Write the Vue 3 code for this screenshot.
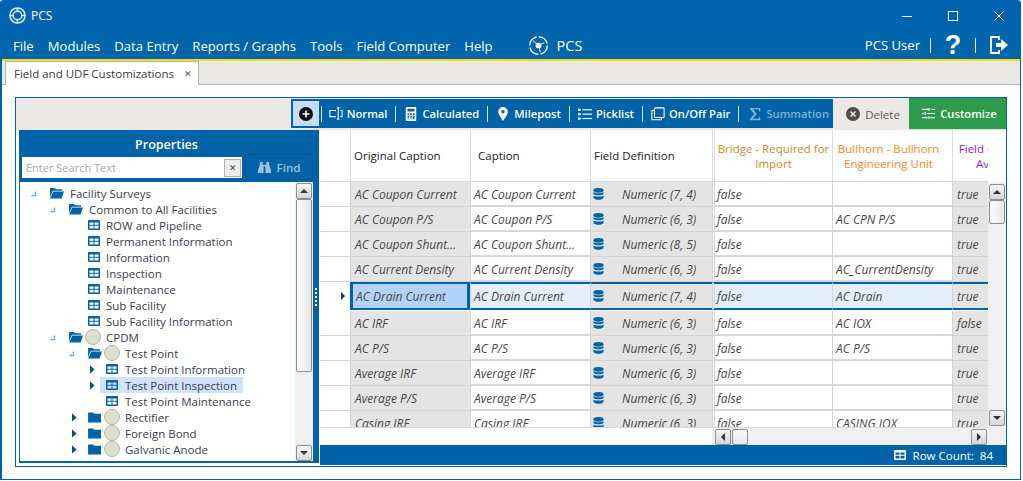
<template>
  <div class="window">
    <!-- title bar -->
    <div class="title-bar">
      <svg class="app-logo" viewBox="0 0 18 18" width="17" height="17">
        <circle cx="9" cy="9" r="8" fill="none" stroke="#dce9f4" stroke-width="1.600" />
        <circle cx="9" cy="9" r="4.600" fill="none" stroke="#dce9f4" stroke-width="1.600" />
        <path d="M9 1v4M9 13v4M1 9h4M13 9h4" stroke="#dce9f4" stroke-width="1.800" />
      </svg>
      <span class="app-name">PCS</span>
      <div class="win-controls">
        <svg viewBox="0 0 12 12" width="12" height="12"><path d="M1 6.500h10" stroke="#fff" /></svg>
        <svg viewBox="0 0 12 12" width="12" height="12"><rect x="1.500" y="1.500" width="9" height="9" fill="none" stroke="#fff" /></svg>
        <svg viewBox="0 0 12 12" width="12" height="12"><path d="M1.500 1.500l9 9M10.500 1.500l-9 9" stroke="#fff" /></svg>
      </div>
    </div>

    <!-- menu -->
    <div class="menu-bar">
      <span v-for="m in menus" :key="m" class="menu-item">{{ m }}</span>
      <div class="menu-logo">
        <svg viewBox="0 0 22 22" width="21" height="21">
          <circle cx="11" cy="11" r="9.200" fill="none" stroke="#fff" stroke-width="1.500" stroke-dasharray="12 2.500" />
          <circle cx="11" cy="11" r="3" fill="#fff" />
          <path d="M11 11L5 6M11 11l6-3M11 11l2 7" stroke="#fff" stroke-width="1" />
        </svg>
        <span>PCS</span>
      </div>
      <div class="menu-right">
        <span class="user">PCS User</span>
        <i class="menu-sep"></i>
        <span class="help">?</span>
        <i class="menu-sep"></i>
        <svg viewBox="0 0 20 20" width="20" height="20">
          <path d="M10 5V2H2v16h8v-3" fill="none" stroke="#fff" stroke-width="1.800" />
          <path d="M7 8h5V4l7 6-7 6v-4H7z" fill="#fff" />
        </svg>
      </div>
    </div>

    <!-- tabs -->
    <div class="tab-strip">
      <div class="tab">
        <span>Field and UDF Customizations</span>
        <span class="tab-x">✕</span>
      </div>
    </div>

    <div class="content">
      <div class="panel">
        <!-- toolbar -->
        <div class="toolbar">
          <div class="tool-blue">
            <div class="add-btn">
              <svg viewBox="0 0 14 14" width="14" height="14">
                <circle cx="7" cy="7" r="7" fill="#111" />
                <path d="M7 3.500v7M3.500 7h7" stroke="#fff" stroke-width="1.600" />
              </svg>
            </div>
            <template v-for="t in tools" :key="t.name">
              <i class="tool-sep"></i>
              <div class="tool" :class="{ disabled: t.disabled, first: t.icon === 'normal' }">
                <svg viewBox="0 0 16 16" width="14" height="14" class="tool-icon">
                  <g v-if="t.icon === 'normal'" fill="none" stroke="currentColor" stroke-width="1.200">
                    <path d="M8 4H1v7h7M13 4h2v7h-2" />
                    <path d="M9 1h3M9 14h3M10.500 1v13" />
                  </g>
                  <g v-else-if="t.icon === 'calc'">
                    <path fill="currentColor" fill-rule="evenodd" d="M3 0h10a1 1 0 0 1 1 1v14a1 1 0 0 1-1 1H3a1 1 0 0 1-1-1V1a1 1 0 0 1 1-1zm1 2v3h8V2zm0 5v2h2V7zm3 0v2h2V7zm3 0v2h2V7zm-6 3v2h2v-2zm3 0v2h2v-2zm3 0v4h2v-4zm-6 3v1h2v-1zm3 0v1h2v-1z" />
                  </g>
                  <g v-else-if="t.icon === 'pin'">
                    <path fill="currentColor" fill-rule="evenodd" d="M8 0a5.500 5.500 0 0 1 5.500 5.500C13.500 9 8 16 8 16S2.500 9 2.500 5.500A5.500 5.500 0 0 1 8 0zm0 3.500a2 2 0 1 0 0 4 2 2 0 0 0 0-4z" />
                  </g>
                  <g v-else-if="t.icon === 'list'" fill="currentColor">
                    <rect x="0" y="2" width="3" height="2.500" /><rect x="0" y="7" width="3" height="2.500" /><rect x="0" y="12" width="3" height="2.500" />
                    <rect x="5" y="2.500" width="11" height="1.300" /><rect x="5" y="7.500" width="11" height="1.300" /><rect x="5" y="12.500" width="11" height="1.300" />
                  </g>
                  <g v-else-if="t.icon === 'pair'" fill="none" stroke="currentColor" stroke-width="1.200">
                    <rect x="4" y="1" width="11" height="11" rx="1" />
                    <path d="M4 4H1v10.500h11V12" />
                  </g>
                  <g v-else-if="t.icon === 'sigma'">
                    <path fill="currentColor" d="M2 1h12v4h-1l-1-2.500H6L10 8l-4.500 5.500H12l1-2.500h1v4H2v-1l5-6-5-6z" />
                  </g>
                </svg>
                <span>{{ t.name }}</span>
              </div>
            </template>
          </div>
          <div class="tool-delete">
            <svg viewBox="0 0 14 14" width="14" height="14">
              <circle cx="7" cy="7" r="7" fill="#4d4d4d" />
              <path d="M4.500 4.500l5 5M9.500 4.500l-5 5" stroke="#eee" stroke-width="1.500" />
            </svg>
            <span>Delete</span>
          </div>
          <div class="tool-customize">
            <svg viewBox="0 0 14 14" width="13" height="13">
              <path d="M0 2.500h7M10 2.500h4M0 7h2M5 7h9M0 11.500h6M9 11.500h5M7.500 1v3M3.500 5.500v3M7.500 10v3" fill="none" stroke="#fff" stroke-width="1.200" />
            </svg>
            <span>Customize</span>
          </div>
        </div>

        <div class="body">
          <!-- properties tree -->
          <div class="props">
            <div class="props-title">Properties</div>
            <div class="search-row">
              <div class="search-box">
                <span class="placeholder">Enter Search Text</span>
                <span class="search-clear">✕</span>
              </div>
              <div class="find-btn">
                <svg viewBox="0 0 14 14" width="13" height="13">
                  <path fill="currentColor" d="M2 1h3v3h4V1h3v3l2 6v3H8V6H6v7H0v-3l2-6z" />
                </svg>
                <span>Find</span>
              </div>
            </div>
            <div class="tree-wrap">
              <div class="tree">
                <div v-for="n in tree" :key="n.label" class="tree-row" :class="`lvl${n.level}`">
                  <span class="arrow" :class="n.arrow">
                    <svg v-if="n.arrow === 'open'" viewBox="0 0 8 8" width="7" height="7"><path d="M7 1v6H1z M6 2.800L2.800 6H6z" fill="#5a93c8" fill-rule="evenodd" /></svg>
                    <svg v-else-if="n.arrow === 'closed'" viewBox="0 0 6 10" width="5" height="9"><path d="M0 0l5.500 5L0 10z" fill="#0b4f86" /></svg>
                  </span>
                  <span class="node" :class="{ selected: n.selected }">
                    <svg v-if="n.icon === 'open'" class="node-icon" viewBox="0 0 15 13" width="14" height="12">
                      <path d="M0 1h5l1.500 1.500H13V4H3L0 11z" fill="#0063a8" />
                      <path d="M3.500 5H15l-2.500 7.500H0z" fill="#0063a8" />
                    </svg>
                    <svg v-else-if="n.icon === 'folder'" class="node-icon" viewBox="0 0 15 13" width="14" height="12">
                      <path d="M0 1.500h5.500L7 3h7v9.500H0z" fill="#0063a8" />
                    </svg>
                    <svg v-else class="node-icon" viewBox="0 0 12 10" width="12" height="10">
                      <path fill="#0063a8" fill-rule="evenodd" d="M1 0h10a1 1 0 0 1 1 1v8a1 1 0 0 1-1 1H1a1 1 0 0 1-1-1V1a1 1 0 0 1 1-1zm.5 2.500v2.200h4V2.500zm5 0v2.200h4V2.500zm-5 3.200v2.800h4V5.700zm5 0v2.800h4V5.700z" />
                    </svg>
                    <span v-if="n.badge" class="badge"></span>
                    <span class="node-label">{{ n.label }}</span>
                  </span>
                </div>
              </div>
              <div class="tree-scroll">
                <div class="sb-btn"><i class="tri-up"></i></div>
                <div class="sb-thumb"></div>
                <div class="sb-btn"><i class="tri-down"></i></div>
              </div>
            </div>
          </div>

          <div class="splitter">
            <i></i><i></i><i></i><i></i><i></i>
          </div>

          <!-- grid -->
          <div class="grid">
            <div class="grid-top">
              <div class="grid-main">
                <div class="grid-table">
                  <div class="grid-row head">
                    <div class="cell indicator"></div>
                    <div class="cell hd">Original Caption</div>
                    <div class="cell hd cap">Caption</div>
                    <div class="cell hd">Field Definition</div>
                    <div class="cell hd center bridge">Bridge - Required for Import</div>
                    <div class="cell hd center bull">Bullhorn - Bullhorn Engineering Unit</div>
                    <div class="cell hd center fieldc"><span>Field Computer Available</span></div>
                  </div>
                  <div
                    v-for="r in rows"
                    :key="r.name"
                    class="grid-row data"
                    :class="{ current: r.current }"
                  >
                    <div class="cell indicator"><i v-if="r.current" class="row-arrow"></i></div>
                    <div class="cell ro orig">{{ r.name }}</div>
                    <div class="cell edit">{{ r.name }}</div>
                    <div class="cell ro def">
                      <svg viewBox="0 0 12 13" width="11" height="12">
                        <ellipse cx="6" cy="2.500" rx="5.500" ry="2.500" fill="#0063a8" />
                        <path d="M.5 4.200C2 6 10 6 11.500 4.200v2.300C10 8.300 2 8.300.5 6.500zM.5 8C2 9.800 10 9.800 11.500 8v2.500C10 13.500 2 13.500.5 10.500z" fill="#0063a8" />
                      </svg>
                      <span>{{ r.def }}</span>
                    </div>
                    <div class="cell edit first-edit">false</div>
                    <div class="cell edit">{{ r.unit }}</div>
                    <div class="cell ro last">{{ r.avail }}</div>
                  </div>
                </div>
                <div class="hscroll">
                  <div class="sb-btn h"><i class="tri-left"></i></div>
                  <div class="sb-thumb h"></div>
                  <div class="h-fill"></div>
                  <div class="sb-btn h"><i class="tri-right"></i></div>
                </div>
              </div>
              <div class="vscroll">
                <div class="sb-btn"><i class="tri-up"></i></div>
                <div class="sb-thumb small"></div>
                <div class="v-fill"></div>
                <div class="sb-btn"><i class="tri-down"></i></div>
              </div>
            </div>
            <div class="status">
              <svg viewBox="0 0 12 10" width="12" height="10">
                <path fill="#fff" fill-rule="evenodd" d="M1 0h10a1 1 0 0 1 1 1v8a1 1 0 0 1-1 1H1a1 1 0 0 1-1-1V1a1 1 0 0 1 1-1zm.5 2.500v2.200h4V2.500zm5 0v2.200h4V2.500zm-5 3.200v2.800h4V5.700zm5 0v2.800h4V5.700z" />
              </svg>
              <span>Row Count:&nbsp; 84</span>
            </div>
          </div>
        </div>
      </div>
    </div>
  </div>
</template>

<script setup>
const menus = ['File', 'Modules', 'Data Entry', 'Reports / Graphs', 'Tools', 'Field Computer', 'Help']

const tools = [
  { name: 'Normal', icon: 'normal' },
  { name: 'Calculated', icon: 'calc' },
  { name: 'Milepost', icon: 'pin' },
  { name: 'Picklist', icon: 'list' },
  { name: 'On/Off Pair', icon: 'pair' },
  { name: 'Summation', icon: 'sigma', disabled: true }
]

const tree = [
  { label: 'Facility Surveys', level: 0, arrow: 'open', icon: 'open' },
  { label: 'Common to All Facilities', level: 1, arrow: 'open', icon: 'open' },
  { label: 'ROW and Pipeline', level: 2 },
  { label: 'Permanent Information', level: 2 },
  { label: 'Information', level: 2 },
  { label: 'Inspection', level: 2 },
  { label: 'Maintenance', level: 2 },
  { label: 'Sub Facility', level: 2 },
  { label: 'Sub Facility Information', level: 2 },
  { label: 'CPDM', level: 1, arrow: 'open', icon: 'open', badge: true },
  { label: 'Test Point', level: 2, arrow: 'open', icon: 'open', badge: true },
  { label: 'Test Point Information', level: 3, arrow: 'closed' },
  { label: 'Test Point Inspection', level: 3, arrow: 'closed', selected: true },
  { label: 'Test Point Maintenance', level: 3 },
  { label: 'Rectifier', level: 2, arrow: 'closed', icon: 'folder', badge: true },
  { label: 'Foreign Bond', level: 2, arrow: 'closed', icon: 'folder', badge: true },
  { label: 'Galvanic Anode', level: 2, arrow: 'closed', icon: 'folder', badge: true }
]

const rows = [
  { name: 'AC Coupon Current', def: 'Numeric (7, 4)', unit: '', avail: 'true' },
  { name: 'AC Coupon P/S', def: 'Numeric (6, 3)', unit: 'AC CPN P/S', avail: 'true' },
  { name: 'AC Coupon Shunt...', def: 'Numeric (8, 5)', unit: '', avail: 'true' },
  { name: 'AC Current Density', def: 'Numeric (6, 3)', unit: 'AC_CurrentDensity', avail: 'true' },
  { name: 'AC Drain Current', def: 'Numeric (7, 4)', unit: 'AC Drain', avail: 'true', current: true },
  { name: 'AC IRF', def: 'Numeric (6, 3)', unit: 'AC IOX', avail: 'false' },
  { name: 'AC P/S', def: 'Numeric (6, 3)', unit: 'AC P/S', avail: 'true' },
  { name: 'Average IRF', def: 'Numeric (6, 3)', unit: '', avail: 'true' },
  { name: 'Average P/S', def: 'Numeric (6, 3)', unit: '', avail: 'true' },
  { name: 'Casing IRF', def: 'Numeric (6, 3)', unit: 'CASING IOX', avail: 'true' }
]
</script>

<style>
html, body {
  margin: 0;
  background: #fff;
  overflow: hidden;
}
</style>

<style scoped>
.window {
  box-sizing: border-box;
  width: 1021px;
  height: 480px;
  border-left: 2px solid #0063ad;
  border-right: 1px solid #0063ad;
  border-bottom: 1px solid #0063ad;
  border-radius: 3px 3px 0 0;
  background: #fff;
  display: flex;
  flex-direction: column;
  font-family: "Open Sans", "Noto Sans", sans-serif;
  font-size: 11.500px;
  color: #333;
  overflow: hidden;
}

/* title bar */
.title-bar {
  height: 31px;
  flex-shrink: 0;
  background: #0063b1;
  display: flex;
  align-items: center;
  padding-left: 7px;
  color: #fff;
}
.app-name {
  margin-left: 5px;
  font-size: 12px;
}
.win-controls {
  margin-left: auto;
  display: flex;
  gap: 34px;
  padding-right: 15px;
}

/* menu */
.menu-bar {
  height: 28px;
  flex-shrink: 0;
  box-sizing: content-box;
  background: #0065aa;
  border-bottom: 2px solid #f7dc0b;
  display: flex;
  align-items: center;
  padding-left: 11px;
  color: #fff;
  font-size: 13.100px;
  gap: 14px;
}
.menu-item {
  position: relative;
  top: 1px;
}
.menu-logo {
  display: flex;
  align-items: center;
  gap: 8px;
  font-size: 14.500px;
  margin-left: 21px;
}
.menu-right {
  margin-left: auto;
  display: flex;
  align-items: center;
  padding-right: 11px;
}
.user {
  margin-right: 10px;
}
.menu-sep {
  width: 1px;
  height: 15px;
  background: #dfeaf3;
}
.help {
  font-family: "Liberation Sans", sans-serif;
  font-size: 27px;
  font-weight: 700;
  width: 44px;
  text-align: center;
  line-height: 28px;
}
.menu-sep + svg {
  margin-left: 13px;
}

/* tabs */
.tab-strip {
  height: 24px;
  flex-shrink: 0;
  box-sizing: border-box;
  background: #ece8e6;
  border-bottom: 1px solid #b4b4b4;
  padding-left: 3px;
}
.tab {
  box-sizing: border-box;
  width: 194px;
  height: 24px;
  background: #fff;
  border: 1px solid #b4b4b4;
  border-bottom: none;
  display: flex;
  align-items: center;
  padding-left: 8px;
  font-size: 11.500px;
  color: #3a3a3a;
  white-space: nowrap;
}
.tab-x {
  margin-left: 10px;
  font-size: 9px;
  color: #555;
}

.content {
  flex: 1;
  min-height: 0;
  padding: 12px 13px 0 13px;
}

.panel {
  box-sizing: border-box;
  height: 370px;
  width: 992px;
  border: 1px solid #0063a8;
  display: flex;
  flex-direction: column;
  background: #fff;
}

/* toolbar */
.toolbar {
  height: 32px;
  flex-shrink: 0;
  background: #ece8e6;
  display: flex;
  justify-content: flex-end;
}
.tool-blue {
  background: #0063a8;
  display: flex;
  align-items: center;
  padding: 0 4px 0 2px;
  color: #fff;
  margin-top: 1px;
  height: 29px;
}
.add-btn {
  width: 26px;
  height: 25px;
  background: #c5def6;
  display: flex;
  align-items: center;
  justify-content: center;
  margin-right: 2px;
}
.tool-sep {
  width: 1px;
  height: 16px;
  background: #d6e6f2;
  flex-shrink: 0;
}
.tool {
  display: flex;
  align-items: center;
  gap: 4px;
  font-weight: 600;
  font-size: 11.200px;
  padding: 0 8px 0 8px;
  white-space: nowrap;
}
.tool.first {
  padding-left: 7px;
}
.tool.disabled {
  color: #7fb1d3;
  padding: 0 0 0 9px;
}
.tool-delete {
  width: 76px;
  box-sizing: border-box;
  padding-left: 4px;
  display: flex;
  align-items: center;
  justify-content: center;
  gap: 5px;
  color: #5a5a5a;
  font-size: 11.500px;
}
.tool-customize {
  width: 97px;
  background: #2e9a4b;
  color: #fff;
  font-weight: 600;
  font-size: 11.200px;
  display: flex;
  align-items: center;
  justify-content: center;
  gap: 5px;
  padding-left: 4px;
  border-bottom: 1px solid #e0e0e0;
  box-sizing: border-box;
}

/* body */
.body {
  flex: 1;
  min-height: 0;
  display: flex;
  padding-left: 3px;
}

.props {
  box-sizing: border-box;
  width: 294px;
  background: #0063a8;
  display: flex;
  flex-direction: column;
  padding: 0 0 2px 1px;
  margin-bottom: 3px;
}
.props-title {
  height: 27px;
  line-height: 29px;
  text-align: center;
  color: #fff;
  font-size: 12.500px;
  font-weight: 600;
  flex-shrink: 0;
}
.search-row {
  height: 25px;
  flex-shrink: 0;
  display: flex;
  align-items: flex-start;
  padding-left: 2px;
  gap: 3px;
}
.search-box {
  box-sizing: border-box;
  width: 220px;
  height: 21px;
  background: #fff;
  display: flex;
  align-items: center;
  justify-content: space-between;
  padding: 0 1px 0 4px;
}
.placeholder {
  color: #a8a8a8;
  font-size: 11px;
}
.search-clear {
  box-sizing: border-box;
  width: 17px;
  height: 18px;
  border: 1px solid #b0b0b0;
  background: #eee;
  font-size: 9px;
  line-height: 16px;
  text-align: center;
  color: #444;
}
.find-btn {
  box-sizing: border-box;
  width: 68px;
  height: 26px;
  border: 1px solid #00518c;
  display: flex;
  align-items: center;
  justify-content: center;
  gap: 6px;
  color: #9cc2dd;
  font-weight: 600;
  margin-top: -3px;
}
.tree-wrap {
  flex: 1;
  min-height: 0;
  background: #fff;
  display: flex;
  overflow: hidden;
}
.tree {
  flex: 1;
  padding-top: 3px;
  min-width: 0;
}
.tree-row {
  height: 16px;
  display: flex;
  align-items: center;
  color: #3c3c50;
  font-size: 11.500px;
  white-space: nowrap;
}
.lvl0 { padding-left: 10px; }
.lvl1 { padding-left: 29px; }
.lvl2 { padding-left: 48px; }
.lvl3 { padding-left: 66px; }
.arrow {
  width: 20px;
  flex-shrink: 0;
  display: flex;
  align-items: center;
  box-sizing: border-box;
}
.arrow.closed {
  padding-left: 4px;
}
.node {
  display: flex;
  align-items: center;
  height: 16px;
}
.node.selected {
  background: #cfe3fa;
  margin-left: -6px;
  padding: 0 6px;
}
.node-icon {
  flex-shrink: 0;
  margin-right: 6px;
}
.lvl3 .node-icon {
  margin-right: 7px;
}
.badge {
  width: 16px;
  height: 16px;
  border-radius: 50%;
  background: #dfdfcf;
  border: 1px solid #b4b4a8;
  box-sizing: border-box;
  margin-left: -4px;
  margin-right: 5px;
  flex-shrink: 0;
}

/* scrollbars */
.tree-scroll,
.vscroll {
  width: 18px;
  flex-shrink: 0;
  background: #f0f0f0;
  display: flex;
  flex-direction: column;
  align-items: center;
  box-sizing: border-box;
}
.tree-scroll {
  padding-top: 1px;
}
.tree-scroll .sb-btn:last-child {
  margin-top: auto;
}
.sb-btn {
  box-sizing: border-box;
  width: 16px;
  height: 16px;
  flex-shrink: 0;
  background: linear-gradient(#f6f6f6, #d6d6d6);
  border: 1px solid #8e8e8e;
  border-radius: 2px;
  display: flex;
  align-items: center;
  justify-content: center;
}
.sb-thumb {
  box-sizing: border-box;
  width: 16px;
  height: 173px;
  background: linear-gradient(90deg, #fdfdfd, #e6e6e6);
  border: 1px solid #8e8e8e;
  border-radius: 2px;
  flex-shrink: 0;
}
.sb-thumb.small {
  height: 24px;
}
.sb-thumb.h {
  width: 16px;
  height: 16px;
  margin-left: 1px;
  background: linear-gradient(#fdfdfd, #e6e6e6);
}
.v-fill,
.h-fill {
  flex: 1;
}
.tri-up, .tri-down, .tri-left, .tri-right {
  width: 0;
  height: 0;
  display: block;
}
.tri-up {
  border-left: 4px solid transparent;
  border-right: 4px solid transparent;
  border-bottom: 4px solid #333;
}
.tri-down {
  border-left: 4px solid transparent;
  border-right: 4px solid transparent;
  border-top: 4px solid #333;
}
.tri-left {
  border-top: 4px solid transparent;
  border-bottom: 4px solid transparent;
  border-right: 4px solid #333;
}
.tri-right {
  border-top: 4px solid transparent;
  border-bottom: 4px solid transparent;
  border-left: 4px solid #333;
}

/* splitter */
.splitter {
  width: 6px;
  margin-right: 1px;
  margin-bottom: 3px;
  flex-shrink: 0;
  display: flex;
  flex-direction: column;
  gap: 2px;
  justify-content: center;
  padding-left: 2px;
  box-sizing: border-box;
  background: #0063a8;
}
.splitter i {
  width: 2px;
  height: 2px;
  background: #fff;
}

/* grid */
.grid {
  flex: 1;
  min-width: 0;
  display: flex;
  flex-direction: column;
  padding-bottom: 1px;
}
.grid-top {
  flex: 1;
  min-height: 0;
  display: flex;
}
.grid-main {
  flex: 1;
  min-width: 0;
  display: flex;
  flex-direction: column;
}
.grid-table {
  flex: 1;
  min-height: 0;
  overflow: hidden;
}
.grid-row {
  display: grid;
  grid-template-columns: 30px 120px 120px 122px 120px 120px 36px;
  white-space: nowrap;
}
.head {
  height: 52px;
  border-bottom: 1px solid #d8d8d8;
  box-sizing: border-box;
}
.cell {
  box-sizing: border-box;
  display: flex;
  align-items: center;
  padding-left: 4px;
  min-width: 0;
  overflow: hidden;
}
.hd {
  border-left: 1px solid #dcdcdc;
  font-size: 11.500px;
  color: #222;
  padding-left: 3px;
}
.hd.cap {
  padding-left: 7px;
}
.hd.center {
  justify-content: center;
  text-align: center;
  white-space: normal;
  line-height: 15px;
  padding: 0 2px;
}
.hd.bridge {
  color: #cc8a22;
  border-left: 3px double #dcdcdc;
}
.hd.bull {
  color: #f98a1c;
  padding-right: 10px;
}
.hd.fieldc {
  color: #a020d0;
  justify-content: flex-start;
}
.fieldc span {
  display: block;
  width: 90px;
  flex-shrink: 0;
}
.data {
  height: 25px;
  border-bottom: 1px solid #d4d4d4;
  box-sizing: border-box;
  font-style: italic;
  font-size: 12px;
  color: #474747;
}
.data .cell {
  height: 24px;
}
.indicator {
  padding: 0;
  background: #fff;
  position: relative;
}
.ro {
  background: #e4e4e4;
  border-left: 1px solid #d4d4d4;
}
.edit {
  background: #fff;
  border-left: 1px solid #d4d4d4;
  border-bottom: 1px solid #d9d9d9;
  padding-left: 3px;
  padding-top: 1px;
}
.def {
  padding-left: 2px;
}
.def span {
  margin-left: 18px;
}
.first-edit {
  border-left: 3px double #d4d4d4;
  padding-left: 2px;
}

/* current row */
.grid-row.current {
  height: 28px;
  margin-bottom: 1px;
  border-bottom: none;
}
.current .cell {
  height: 28px;
  border-top: 2px solid #0063a8;
  border-bottom: 2px solid #0063a8;
  padding-top: 0;
}
.current .cell.indicator {
  border: none;
}
.current .edit {
  background: #e3eefb;
}
.current .orig {
  background: #b2d2fa;
  border-left: 3px solid #0063a8;
  border-right: 3px solid #0063a8;
  padding-left: 3px;
}
.row-arrow {
  display: block;
  position: absolute;
  right: 5px;
  top: 10px;
  border-top: 4px solid transparent;
  border-bottom: 4px solid transparent;
  border-left: 4px solid #1a3a5c;
}

.hscroll {
  height: 18px;
  flex-shrink: 0;
  display: flex;
  align-items: center;
  padding-left: 395px;
  padding-right: 1px;
  background: linear-gradient(90deg, #fff 392px, #f0f0f0 392px);
  border-top: 1px solid #d8d8d8;
  box-sizing: border-box;
}
.vscroll {
  padding-top: 54px;
  padding-bottom: 19px;
  background: linear-gradient(#fff 52px, #f0f0f0 52px);
}

.status {
  height: 20px;
  flex-shrink: 0;
  background: #0063a8;
  color: #fff;
  display: flex;
  align-items: center;
  justify-content: flex-end;
  gap: 7px;
  padding-right: 13px;
}
</style>
